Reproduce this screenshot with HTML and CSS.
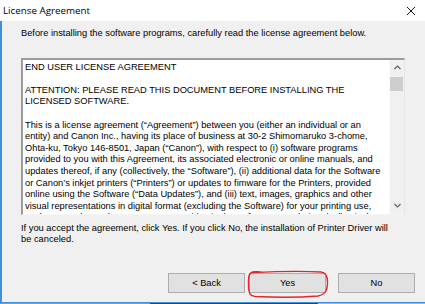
FILE: index.html
```html
<!DOCTYPE html>
<html>
<head>
<meta charset="utf-8">
<link rel="stylesheet" href="styles.css">
</head>
<body>
<div class="window">
  <div class="titlebar">
    <span class="title">License Agreement</span>
    <svg class="close" width="10" height="10" viewBox="0 0 10 10"><path d="M1 1 L9 9 M9 1 L1 9" stroke="#1a1a1a" stroke-width="1" fill="none"/></svg>
  </div>
  <div class="client">
    <p class="intro">Before installing the software programs, carefully read the license agreement below.</p>
    <div class="eula">
      <div class="eula-text">
        <div class="line">END USER LICENSE AGREEMENT</div>
        <div class="line blank"></div>
        <div class="line">ATTENTION: PLEASE READ THIS DOCUMENT BEFORE INSTALLING THE</div>
        <div class="line">LICENSED SOFTWARE.</div>
        <div class="line blank"></div>
        <div class="line">This is a license agreement (“Agreement”) between you (either an individual or an</div>
        <div class="line">entity) and Canon Inc., having its place of business at 30-2 Shimomaruko 3-chome,</div>
        <div class="line">Ohta-ku, Tokyo 146-8501, Japan (“Canon”), with respect to (i) software programs</div>
        <div class="line">provided to you with this Agreement, its associated electronic or online manuals, and</div>
        <div class="line">updates thereof, if any (collectively, the “Software”), (ii) additional data for the Software</div>
        <div class="line">or Canon’s inkjet printers (“Printers”) or updates to fimware for the Printers, provided</div>
        <div class="line">online using the Software (“Data Updates”), and (iii) text, images, graphics and other</div>
        <div class="line">visual representations in digital format (excluding the Software) for your printing use,</div>
        <div class="line">such as templates, that Canon may provide via the Software or websites (collectively</div>
      </div>
      <div class="vscroll">
        <div class="arrow"><svg width="7" height="5" viewBox="0 0 7 5"><path d="M0.5 4 L3.5 1 L6.5 4" stroke="#606060" stroke-width="1.2" fill="none"/></svg></div>
        <div class="thumb"></div>
        <div class="track"></div>
        <div class="arrow"><svg width="7" height="5" viewBox="0 0 7 5"><path d="M0.5 1 L3.5 4 L6.5 1" stroke="#606060" stroke-width="1.2" fill="none"/></svg></div>
      </div>
    </div>
    <p class="prompt">If you accept the agreement, click Yes. If you click No, the installation of Printer Driver will<br>be canceled.</p>
    <div class="buttons">
      <button class="btn">&lt; Back</button>
      <button class="btn">Yes</button>
      <button class="btn btn-no">No</button>
    </div>
  </div>
  <div class="strip"></div>
  <svg class="annotation" width="425" height="304" viewBox="0 0 425 304">
    <path d="M252 272.5 C275 271.5 305 271 321 272 C326 272.5 327.5 276 327.5 282 C327.5 290 326 294 318 296 C300 297.5 275 297.5 255 296.5 C250 296 248.5 293 248.5 285 C248.5 278 248 273 253 272 C256 271.5 260 272 262 272.5" stroke="#e4262b" stroke-width="1.4" fill="none" stroke-linecap="round"/>
  </svg>
</div>
</body>
</html>
```

FILE: styles.css
```css
* { box-sizing: border-box; }
html, body { margin: 0; padding: 0; }
body {
  width: 425px;
  height: 304px;
  overflow: hidden;
  background: #f0f0f0;
  font-family: "Liberation Sans", Arial, sans-serif;
  font-size: 9.3px;
  color: #000;
}
.window {
  position: relative;
  width: 425px;
  height: 304px;
  display: flex;
  flex-direction: column;
}
.titlebar {
  flex: none;
  height: 21px;
  background: #fff;
  display: flex;
  align-items: center;
  justify-content: space-between;
  padding: 0 9px 0 3px;
}
.title {
  font-family: "Open Sans", "Noto Sans", sans-serif;
  font-size: 9.8px;
  color: #000;
}
.close { display: block; }
.client {
  flex: 1;
  background: #f0f0f0;
  border-left: 2px solid #3f8fdb;
  border-bottom: 1px solid #3f8fdb;
  padding: 7px 10px 0 19px;
  display: flex;
  flex-direction: column;
  line-height: 11.6px;
}
.intro, .prompt { margin: 0; white-space: nowrap; }
.eula {
  margin-top: 18px;
  width: 384px;
  height: 157px;
  flex: none;
  display: flex;
  background: #fff;
  border-style: solid;
  border-width: 2px 1px 1px 2px;
  border-color: #9c9c9c #e6e6e6 #f5f5f5 #9c9c9c;
}
.eula-text {
  flex: 1;
  padding: 2px 0 0 2px;
  overflow: hidden;
  white-space: nowrap;
}
.line { height: 11.6px; }
.vscroll {
  width: 15px;
  flex: none;
  background: #f0f0f0;
  border-left: 1px solid #fafafa;
  display: flex;
  flex-direction: column;
}
.arrow {
  height: 16px;
  display: flex;
  align-items: center;
  justify-content: center;
}
.thumb {
  height: 14px;
  margin: 1px 1px 0 0;
  background: #cdcdcd;
}
.track { flex: 1; }
.prompt { margin-top: 8px; }
.buttons {
  margin-top: 27px;
  display: flex;
  justify-content: flex-end;
  gap: 4px;
}
.btn {
  width: 77px;
  height: 20px;
  padding: 0;
  background: #e1e1e1;
  border: 1px solid #adadad;
  font-family: inherit;
  font-size: 9.3px;
  color: #000;
}
.btn-no { margin-left: 8px; }
.strip {
  flex: none;
  height: 1px;
  background: linear-gradient(to right, #5fa4e6 0, #5fa4e6 150px, #4b3662 150px, #4b3662 318px, #8fbde9 318px);
}
.annotation {
  position: absolute;
  left: 0;
  top: 0;
  pointer-events: none;
}
```
